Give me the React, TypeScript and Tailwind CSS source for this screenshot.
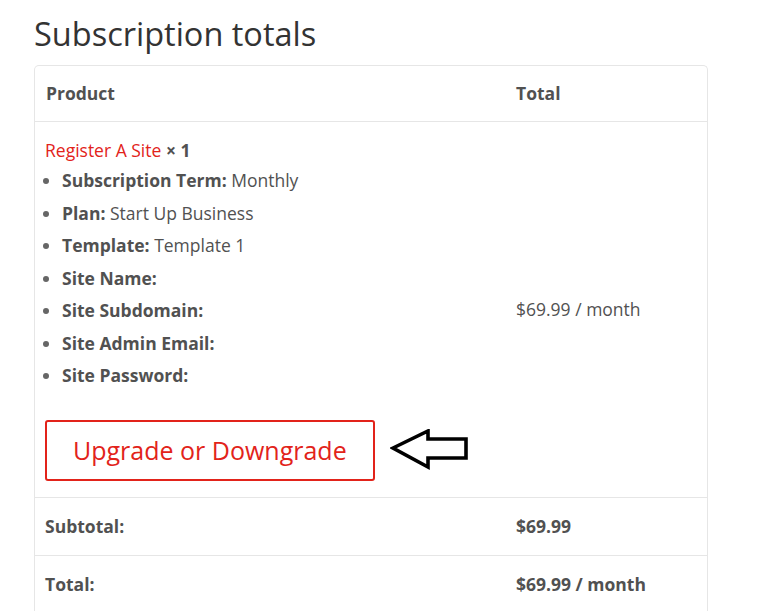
const meta = [
  { label: 'Subscription Term:', value: 'Monthly' },
  { label: 'Plan:', value: 'Start Up Business' },
  { label: 'Template:', value: 'Template 1' },
  { label: 'Site Name:', value: '' },
  { label: 'Site Subdomain:', value: '' },
  { label: 'Site Admin Email:', value: '' },
  { label: 'Site Password:', value: '' },
];

const ArrowAnnotation = () => (
  <svg width="80" height="42" viewBox="0 0 80 42" className="block">
    <polygon
      points="3,19 38,2 38,10 76,10 76,29 38,29 38,38"
      fill="none"
      stroke="#000"
      strokeWidth="3.6"
      strokeLinejoin="miter"
    />
  </svg>
);

const App = () => {
  return (
    <div className="min-h-[611px] bg-white px-[34px] pt-3 font-['Open_Sans',sans-serif] text-[17.5px] text-[#515151]">
      <h2 className="mb-[9px] text-[32.5px] leading-[44px] font-normal text-[#333333]">Subscription totals</h2>

      <div className="w-[674px] rounded-t-[5px] border border-b-0 border-[#e6e6e6]">
        {/* header */}
        <div className="grid grid-cols-[470px_1fr] border-b border-[#e6e6e6] font-bold leading-6">
          <div className="pl-[11px] pt-[15px] pb-4">Product</div>
          <div className="pl-[11px] pt-[15px] pb-4">Total</div>
        </div>

        {/* item */}
        <div className="grid grid-cols-[470px_1fr] border-b border-[#e6e6e6]">
          <div className="pl-[10px] pt-[14px] pb-4">
            <div className="leading-[28px]">
              <span className="text-[#e2231a]">Register A Site</span>{' '}
              <strong className="font-bold">× 1</strong>
            </div>
            <ul className="list-disc pl-[17px] leading-[32.5px] marker:text-[#666]">
              {meta.map((m) => (
                <li key={m.label}>
                  <strong className="font-bold">{m.label}</strong>
                  {m.value && <span> {m.value}</span>}
                </li>
              ))}
            </ul>
            <div className="mt-[28px] flex items-center gap-[15px]">
              <button className="h-[61px] rounded-[3px] border-2 border-[#e2231a] px-[26px] text-[25px] leading-none text-[#e2231a]">
                Upgrade or Downgrade
              </button>
              <ArrowAnnotation />
            </div>
          </div>
          <div className="flex items-center pl-[11px]">$69.99 / month</div>
        </div>

        {/* subtotal */}
        <div className="grid grid-cols-[470px_1fr] border-b border-[#e6e6e6] font-bold leading-6">
          <div className="pl-[10px] pt-4 pb-[17px]">Subtotal:</div>
          <div className="pl-[11px] pt-4 pb-[17px]">$69.99</div>
        </div>

        {/* total */}
        <div className="grid grid-cols-[470px_1fr] font-bold leading-6">
          <div className="pl-[10px] pt-4 pb-[17px]">Total:</div>
          <div className="pl-[11px] pt-4 pb-[17px]">$69.99 / month</div>
        </div>
      </div>
    </div>
  );
};

export default App;
